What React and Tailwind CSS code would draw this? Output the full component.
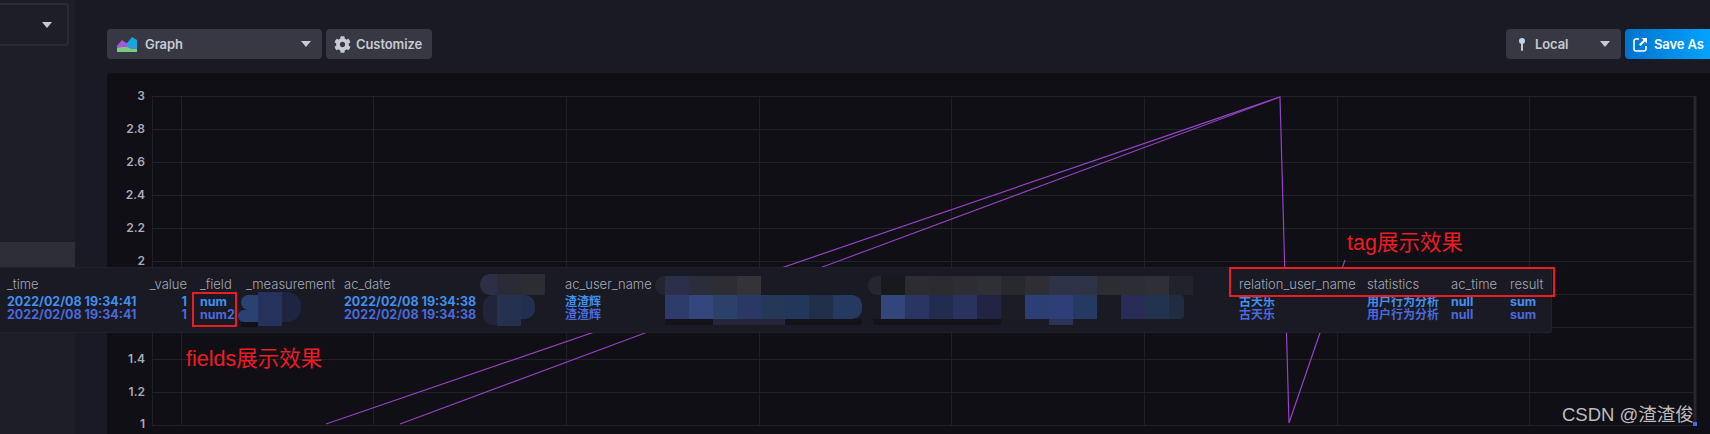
import { FaCog } from "react-icons/fa";

const yTicks = [
  ["3", 96], ["2.8", 129], ["2.6", 162], ["2.4", 195], ["2.2", 228], ["2", 261],
  ["1.8", 294], ["1.6", 327], ["1.4", 359], ["1.2", 392], ["1", 425],
];
const xGrid = [181, 373, 566, 759, 951, 1144, 1337, 1529];

const columns = [
  { name: "_time", w: "w-[142px] text-[12.5px]", rows: ["2022/02/08 19:34:41", "2022/02/08 19:34:41"] },
  { name: "_value", w: "w-[51px] pr-[13px] text-right text-[12.5px]", rows: ["1", "1"] },
  { name: "_field", w: "w-[46px] text-[12.5px]", rows: ["num", "num2"] },
  { name: "_measurement", w: "w-[98px] text-[12.5px]", rows: [] },
  { name: "ac_date", w: "w-[221px] text-[12.5px]", rows: ["2022/02/08 19:34:38", "2022/02/08 19:34:38"] },
  { name: "ac_user_name", w: "w-[674px] text-[12px]", rows: ["渣渣辉", "渣渣辉"] },
  { name: "relation_user_name", w: "w-[128px] text-[12px]", rows: ["古天乐", "古天乐"] },
  { name: "statistics", w: "w-[84px] text-[12px]", rows: ["用户行为分析", "用户行为分析"] },
  { name: "ac_time", w: "w-[59px] text-[12.5px]", rows: ["null", "null"] },
  { name: "result", w: "w-[40px] text-[12.5px]", rows: ["sum", "sum"] },
];

const mosaicTopC = ["w-[10px] rounded-l-[9px] bg-[#24252e]", "w-6 bg-[#2b2f49]", "w-6 bg-[#2a2d3a]", "w-6 bg-[#2d2d33]", "w-6 bg-[#333338]"];
const mosaicBottomC = [
  "w-6 bg-[#2d3b6b]", "w-6 bg-[#35467f]", "w-6 bg-[#2c4168]", "w-6 bg-[#2b3765]",
  "w-6 bg-[#253858]", "w-6 bg-[#22375a]", "w-6 bg-[#222f4b]", "w-[29px] bg-[#263a61] rounded-r-[10px]",
];
const mosaicShadowC = ["w-[48px] bg-[#121217]", "w-[72px] bg-[#25253d]", "w-[77px] bg-[#121217] rounded-br-[4px]"];

const mosaicTopD = [
  "w-[13px] rounded-l-[9px] bg-[#25262e]",
  "w-6 bg-[#18191c]", "w-6 bg-[#2c2c31]", "w-6 bg-[#2b2b30]", "w-6 bg-[#2d2d33]", "w-6 bg-[#2f2f36]", "w-6 bg-[#28282f]",
  "w-6 bg-[#2e2e34]", "w-6 bg-[#2f3347]", "w-6 bg-[#2f3347]", "w-6 bg-[#2c2c33]", "w-6 bg-[#2d2d35]", "w-6 bg-[#2f2f38]", "w-6 bg-[#22222a]",
];
const mosaicBottomD = [
  "w-6 bg-[#33457a]", "w-6 bg-[#2b3564]", "w-6 bg-[#222c4e]", "w-6 bg-[#2a3260]", "w-6 bg-[#232444]", "w-6 bg-[#1c1d24]",
  "w-6 bg-[#2d3d75]", "w-6 bg-[#2e3e76]", "w-6 bg-[#243a62]", "w-6 bg-transparent", "w-6 bg-[#2a2c58]", "w-6 bg-[#22334f]",
  "w-[15px] h-[18px] bg-[#212b41] rounded-r-[4px]",
];
const mosaicShadowD = ["w-[128px] bg-[#121217] rounded-b-[4px]", "w-[48px] bg-transparent", "w-6 bg-[#2b3458]"];

function Caret({ className }) {
  return (
    <svg width="10" height="6" viewBox="0 0 10 6" className={className}>
      <path d="M0 0h10L5 6z" fill="#c6cad3" />
    </svg>
  );
}

function Strip({ cells, className }) {
  return (
    <div className={"flex " + className}>
      {cells.map((c, i) => (
        <div key={i} className={"shrink-0 h-full " + c} />
      ))}
    </div>
  );
}

function GraphIcon() {
  return (
    <svg width="20" height="15" viewBox="0 0 20 15" className="shrink-0">
      <path d="M0 15V9l5-5 5 2 5-6 5 3v12z" fill="#16a5dc" />
      <path d="M0 15V9l5-6 5 4 5 3 5 1v4z" fill="#a956dc" />
      <path d="M10 7l5 3 5 1v1l-6 0-4-1z" fill="#2f9fd0" />
      <path d="M0 15v-4l6-1 4 0 4 2 6 0v3z" fill="#7dc97f" />
    </svg>
  );
}

function PinIcon() {
  return (
    <svg width="8" height="13" viewBox="0 0 8 13" className="shrink-0">
      <circle cx="4" cy="3" r="3" fill="#b9d7ee" />
      <rect x="3" y="4" width="2" height="9" rx="1" fill="#c6cad3" />
    </svg>
  );
}

function SaveIcon() {
  return (
    <svg width="15" height="15" viewBox="0 0 15 15" fill="none" className="shrink-0">
      <path d="M6 2H3a2 2 0 0 0-2 2v8a2 2 0 0 0 2 2h8a2 2 0 0 0 2-2V9" stroke="#fff" strokeWidth="1.6" />
      <path d="M8.5 1H14v5.5L12 4.6 7.5 9 6 7.5 10.4 3z" fill="#fff" />
    </svg>
  );
}

function Chart() {
  return (
    <svg width="1603" height="361" viewBox="107 73 1603 361" className="block">
      {yTicks.map(([label, y]) => (
        <g key={label}>
          <line x1="152" x2="1695" y1={y + 0.5} y2={y + 0.5} stroke="#212128" />
          <text x="145" y={label === "1" ? y - 1 : y} dy="3.5" textAnchor="end" fontSize="12" fontWeight="600" fill="#a9acb8" fontFamily="Inter, sans-serif">
            {label}
          </text>
        </g>
      ))}
      <line x1="152.5" x2="152.5" y1="96" y2="426" stroke="#212128" />
      {xGrid.map((x) => (
        <line key={x} x1={x + 0.5} x2={x + 0.5} y1="96" y2="426" stroke="#212128" />
      ))}
      <line x1="1695" x2="1695" y1="96" y2="426" stroke="#272732" strokeWidth="3" />
      <polyline points="326,424 1280,97 1289,423 1345,260" fill="none" stroke="#9343c4" strokeWidth="1.2" />
      <polyline points="400,424 1280,97" fill="none" stroke="#9343c4" strokeWidth="1.1" />
    </svg>
  );
}

function DataTooltip() {
  return (
    <div className="absolute left-0 top-[267px] w-[1552px] h-[66px] bg-[#191a23] border border-l-0 border-[#20212b] rounded-r-[3px] pl-[7px] pt-[8px] flex">
      {columns.map((col) => (
        <div key={col.name} className={"shrink-0 " + col.w}>
          <div className="h-[16px] leading-[16px] text-[13px] font-light text-[#a4a8b6] whitespace-nowrap">{col.name}</div>
          <div className="mt-[3px] leading-[13px] font-bold whitespace-nowrap">
            <div className="text-[#4190f0]">{col.rows[0] || "\u00a0"}</div>
            <div className="text-[#4b69dd]">{col.rows[1] || "\u00a0"}</div>
          </div>
        </div>
      ))}

      {/* smudged out columns */}
      <div className="absolute left-[238px] top-[24px] flex items-start">
        <div className="w-[20px] pt-[3px] flex flex-col items-end">
          <div className="w-[17px] h-[15px] bg-[#2a4272] rounded-l-[8px]" />
          <div className="w-[20px] h-[12px] bg-[#2a4272] rounded-l-[6px]" />
          <div className="w-[17px] h-[5px] bg-[#101117]" />
        </div>
        <div className="w-[24px] h-[34px] bg-[#25335c]" />
        <div className="w-[19px] h-[30px] bg-[#1f2540] rounded-r-[14px]" />
      </div>

      <div className="absolute left-[480px] top-[6px] flex flex-col">
        <div className="flex h-[21px]">
          <div className="w-[17px] bg-[#2b3046] rounded-l-[10px]" />
          <div className="w-6 bg-[#2a2b36]" />
          <div className="w-6 bg-[#2c2d33]" />
        </div>
        <div className="flex items-start ml-[3px]">
          <div className="w-[14px] h-[30px] bg-[#22243c] rounded-l-[10px]" />
          <div className="w-6 h-[31px] bg-[#25324f]" />
          <div className="w-[14px] h-[24px] bg-[#22304f] rounded-r-[10px]" />
        </div>
      </div>

      <div className="absolute left-[655px] top-[8px] flex flex-col">
        <Strip cells={mosaicTopC} className="h-[19px]" />
        <Strip cells={mosaicBottomC} className="h-6 ml-[10px]" />
        <Strip cells={mosaicShadowC} className="h-[6px] ml-[10px]" />
      </div>

      <div className="absolute left-[868px] top-[8px] flex flex-col">
        <Strip cells={mosaicTopD} className="h-[19px]" />
        <Strip cells={mosaicBottomD} className="h-6 ml-[13px]" />
        <Strip cells={mosaicShadowD} className="h-[6px] ml-[5px]" />
      </div>
    </div>
  );
}

export default function App() {
  return (
    <div className="relative w-[1710px] h-[434px] overflow-hidden flex bg-[#191a23] font-['Inter','Noto_Sans_CJK_SC',sans-serif]">
      {/* left side panel */}
      <div className="w-[75px] shrink-0 bg-[#1d1e27]">
        <div className="mt-[3px] w-[69px] h-[43px] border-2 border-l-0 border-[#2a2b35] rounded-r-[4px] flex items-center justify-end pr-[15px]">
          <Caret />
        </div>
        <div className="mt-[196px] w-full h-[25px] bg-[#2d2e38]" />
      </div>

      <div className="flex-1 min-w-0 pl-[32px]">
        <div className="pt-[29px] h-[73px] flex text-[13px] font-semibold tracking-[-0.1px] text-[#c6cad3]">
          <button className="w-[215px] h-[30px] bg-[#383844] rounded-[4px] flex items-center pl-[10px] pr-[11px]">
            <GraphIcon />
            <span className="ml-[8px] pt-px flex-1 text-left">Graph</span>
            <Caret />
          </button>
          <button className="ml-[4px] w-[106px] h-[30px] bg-[#383844] rounded-[4px] flex items-center pl-[8px]">
            <FaCog className="text-[17px] shrink-0" />
            <span className="ml-[5px] pt-px">Customize</span>
          </button>
          <button className="ml-auto w-[115px] h-[30px] bg-[#383844] rounded-[4px] flex items-center pl-[12px] pr-[11px]">
            <PinIcon />
            <span className="ml-[9px] pt-px flex-1 text-left">Local</span>
            <Caret />
          </button>
          <button className="ml-[4px] w-[85px] h-[30px] bg-gradient-to-r from-[#0073cc] to-[#00a3ff] rounded-l-[4px] flex items-center pl-[8px] text-white">
            <SaveIcon />
            <span className="ml-[6px] pt-px whitespace-nowrap">Save As</span>
          </button>
        </div>
        <div className="h-[361px] bg-[#0f0f15] rounded-tl-[4px]">
          <Chart />
        </div>
      </div>

      <DataTooltip />

      {/* red notes drawn on the screenshot */}
      <div className="absolute left-[192px] top-[292px] w-[45px] h-[35px] border-2 border-[#ed1c24]" />
      <div className="absolute left-[1229px] top-[267px] w-[326px] h-[30px] border-2 border-[#ed1c24]" />
      <div className="absolute left-[186px] top-[344px] text-[21.5px] leading-[30px] text-[#ed1c24] font-['Liberation_Sans','Noto_Sans_CJK_SC',sans-serif]">fields展示效果</div>
      <div className="absolute left-[1347px] top-[228px] text-[21.5px] leading-[30px] text-[#ed1c24] font-['Liberation_Sans','Noto_Sans_CJK_SC',sans-serif]">tag展示效果</div>

      <div className="absolute left-[1562px] top-[402px] text-[18.5px] leading-[26px] text-[#bdbdbd] font-['Liberation_Sans','Noto_Sans_CJK_SC',sans-serif] whitespace-nowrap">CSDN @渣渣俊</div>
      <div className="absolute left-[1693px] top-[422px] w-[4px] h-[4px] bg-[#4a6ae0]" />
    </div>
  );
}
